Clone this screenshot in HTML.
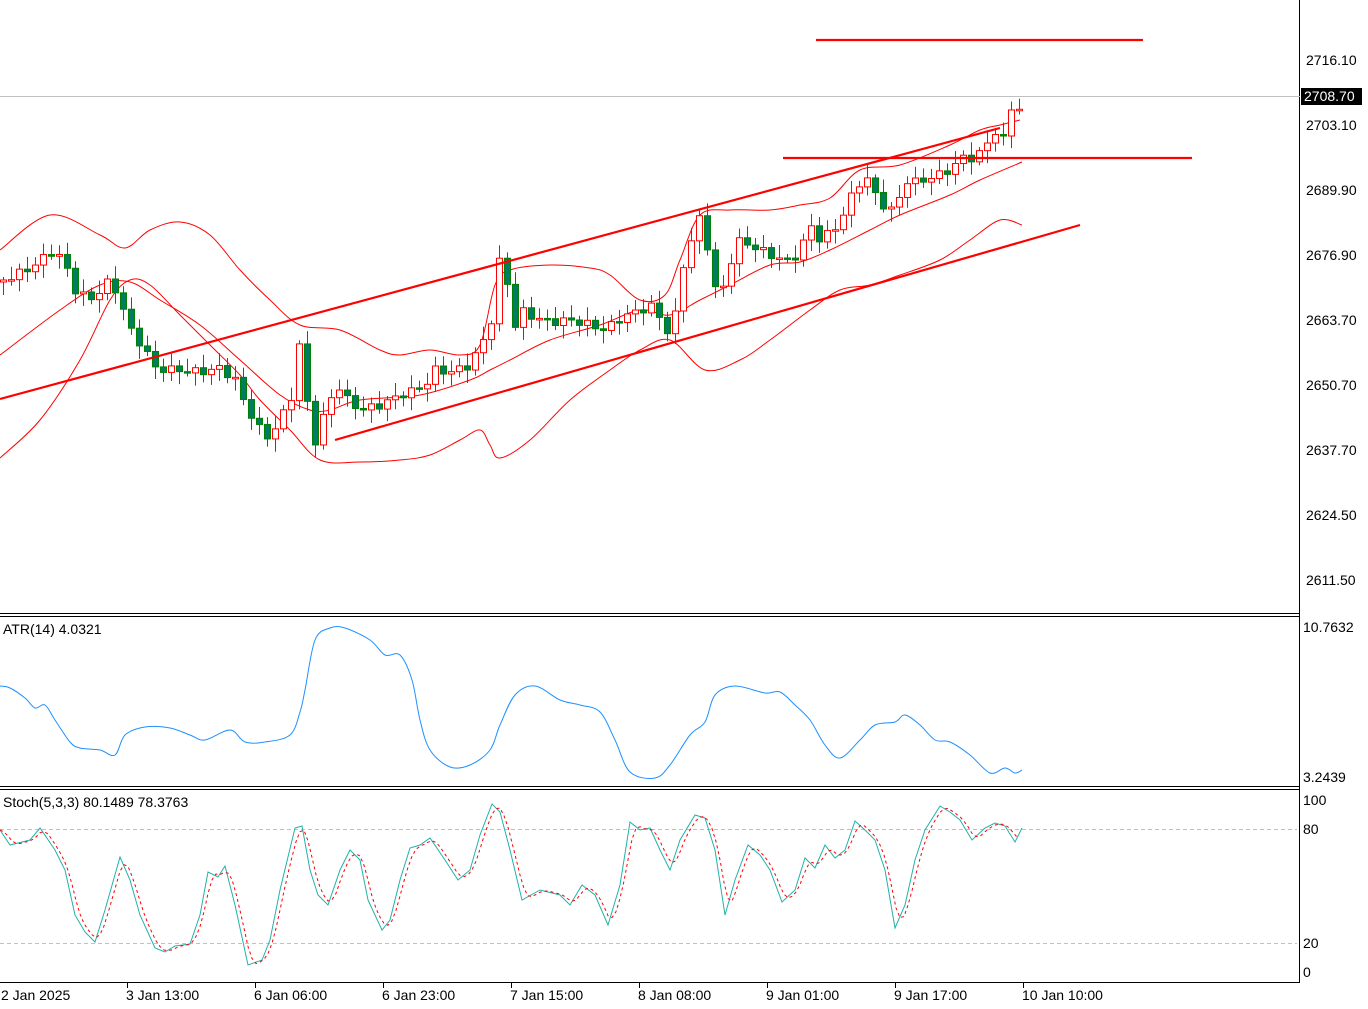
<!DOCTYPE html>
<html><head><meta charset="utf-8"><style>
html,body{margin:0;padding:0;background:#fff;width:1368px;height:1009px;overflow:hidden}
svg{display:block;font-family:"Liberation Sans",sans-serif;font-size:14px}
</style></head><body>
<svg id="s" width="1368" height="1009" xmlns="http://www.w3.org/2000/svg">
<rect width="1368" height="1009" fill="#fff"/>
<line x1="1299.5" y1="0" x2="1299.5" y2="983" stroke="#000"/>
<line x1="0" y1="613.5" x2="1300" y2="613.5" stroke="#000"/>
<line x1="0" y1="616.5" x2="1300" y2="616.5" stroke="#000"/>
<line x1="0" y1="786.5" x2="1300" y2="786.5" stroke="#000"/>
<line x1="0" y1="789.5" x2="1300" y2="789.5" stroke="#000"/>
<line x1="0" y1="982.5" x2="1300" y2="982.5" stroke="#000"/>
<line x1="0" y1="829.5" x2="1297" y2="829.5" stroke="#c0c0c0" stroke-dasharray="4,3"/>
<line x1="0" y1="943.5" x2="1297" y2="943.5" stroke="#c0c0c0" stroke-dasharray="4,3"/>
<line x1="0" y1="96.5" x2="1300" y2="96.5" stroke="#c0c0c0"/>
<g id="bands" fill="none" stroke="#f00" stroke-width="1"></g>
<g id="candles"></g>
<g stroke="#f00" stroke-width="2.2">
<line x1="0" y1="399" x2="1000" y2="128"/>
<line x1="335" y1="440" x2="1080" y2="225"/>
<line x1="816" y1="40" x2="1143" y2="40"/>
<line x1="783" y1="158" x2="1192" y2="158"/>
</g>
<g id="ind" fill="none"></g>
<g fill="#000">
<text x="1306" y="65">2716.10</text>
<text x="1306" y="130">2703.10</text>
<text x="1306" y="195">2689.90</text>
<text x="1306" y="260">2676.90</text>
<text x="1306" y="325">2663.70</text>
<text x="1306" y="390">2650.70</text>
<text x="1306" y="455">2637.70</text>
<text x="1306" y="520">2624.50</text>
<text x="1306" y="585">2611.50</text>
<text x="1303" y="632">10.7632</text>
<text x="1303" y="782">3.2439</text>
<text x="1303" y="805">100</text>
<text x="1303" y="834">80</text>
<text x="1303" y="948">20</text>
<text x="1303" y="977">0</text>
<text x="3" y="634">ATR(14) 4.0321</text>
<text x="3" y="807">Stoch(5,3,3) 80.1489 78.3763</text>
<text x="1" y="1000">2 Jan 2025</text>
<text x="126" y="1000">3 Jan 13:00</text>
<text x="254" y="1000">6 Jan 06:00</text>
<text x="382" y="1000">6 Jan 23:00</text>
<text x="510" y="1000">7 Jan 15:00</text>
<text x="638" y="1000">8 Jan 08:00</text>
<text x="766" y="1000">9 Jan 01:00</text>
<text x="894" y="1000">9 Jan 17:00</text>
<text x="1022" y="1000">10 Jan 10:00</text>
</g>
<g stroke="#000">
<line x1="127.5" y1="983" x2="127.5" y2="988"/><line x1="255.5" y1="983" x2="255.5" y2="988"/>
<line x1="383.5" y1="983" x2="383.5" y2="988"/><line x1="511.5" y1="983" x2="511.5" y2="988"/>
<line x1="639.5" y1="983" x2="639.5" y2="988"/><line x1="767.5" y1="983" x2="767.5" y2="988"/>
<line x1="895.5" y1="983" x2="895.5" y2="988"/><line x1="1023.5" y1="983" x2="1023.5" y2="988"/>
</g>
<rect x="1301" y="88" width="61" height="17" fill="#000"/>
<text x="1304" y="101" fill="#fff">2708.70</text>
</svg>
<script>
const NS="http://www.w3.org/2000/svg";
function el(p,t,a){const e=document.createElementNS(NS,t);for(const k in a)e.setAttribute(k,a[k]);p.appendChild(e);return e;}
function interp(pts,x){for(let i=0;i<pts.length-1;i++){if(x>=pts[i][0]&&x<=pts[i+1][0]){const t=(x-pts[i][0])/(pts[i+1][0]-pts[i][0]);return pts[i][1]+t*(pts[i+1][1]-pts[i][1]);}}return pts[pts.length-1][1];}
function smooth(p){let d='M'+p[0][0]+','+p[0][1];for(let i=0;i<p.length-1;i++){const p0=p[i-1]||p[i],p1=p[i],p2=p[i+1],p3=p[i+2]||p2;
d+=' C'+(p1[0]+(p2[0]-p0[0])/6)+','+(p1[1]+(p2[1]-p0[1])/6)+' '+(p2[0]-(p3[0]-p1[0])/6)+','+(p2[1]-(p3[1]-p1[1])/6)+' '+p2[0]+','+p2[1];}return d;}
const bands=document.getElementById('bands');
const up=[[0,250],[50,215],[100,235],[125,248],[150,230],[180,222],[210,235],[240,270],[270,300],[300,325],[340,330],[380,350],[400,355],[430,350],[460,355],[480,345],[495,285],[510,270],[550,265],[590,268],[610,275],[640,300],[665,295],[680,260],[700,215],[730,210],[770,210],[800,205],[830,198],[860,170],[900,165],[950,145],[980,130],[1000,125],[1020,120]];
const mid=[[0,355],[60,310],[100,285],[130,282],[160,300],[200,325],[240,360],[280,395],[310,410],[330,410],[360,400],[420,395],[470,380],[490,370],[510,360],[550,340],[600,325],[640,310],[670,315],[700,300],[730,285],[770,265],[800,262],[830,250],[870,230],[900,215],[950,195],[980,180],[1022,162]];
const lo=[[0,458],[40,420],[80,360],[110,300],[130,280],[150,285],[180,315],[210,345],[240,375],[260,400],[290,430],[320,460],[360,462],[400,460],[430,455],[460,440],[480,430],[490,445],[500,458],[530,440],[570,400],[610,370],[640,350],[670,340],[705,370],[740,360],[770,340],[810,310],[840,290],[870,285],[900,275],[940,260],[970,240],[1000,220],[1022,225]];
[up,mid,lo].forEach(p=>el(bands,'path',{d:smooth(p)}));
const cl=[[3,280],[15,275],[30,268],[47,255],[55,250],[65,265],[75,290],[90,300],[100,290],[110,280],[120,300],[130,330],[145,350],[155,368],[175,370],[200,372],[220,368],[235,380],[245,405],[260,430],[270,440],[280,415],[290,410],[295,345],[303,345],[311,462],[319,420],[327,415],[335,380],[345,398],[360,410],[380,405],[400,395],[415,390],[425,385],[435,370],[450,372],[470,365],[480,345],[490,330],[497,262],[505,262],[512,335],[520,310],[535,318],[550,322],[570,320],[590,325],[605,330],[620,318],[640,310],[655,305],[665,335],[675,315],[683,265],[695,228],[703,210],[711,282],[719,295],[727,280],[735,240],[750,245],[770,255],[790,262],[800,250],[810,225],[820,240],[835,228],[845,210],[855,188],[862,180],[870,178],[878,205],[887,205],[895,215],[903,180],[915,182],[930,178],[945,172],[955,165],[965,155],[975,160],[985,145],[995,132],[1003,140],[1010,105],[1016,118],[1022,100]];
const cg=document.getElementById('candles');
let prev=282;
for(let i=0;i<128;i++){const x=3+i*8;let c=interp(cl,x);c+=Math.sin(i*2.3)*4;let o=prev;prev=c;
 const bull=c<o;const col=bull?'#f00':'#008000';
 const top=Math.min(o,c),bot=Math.max(o,c);const h=Math.max(bot-top,1.5);
 const wt=top-3-Math.abs(Math.sin(i*1.7))*10, wb=bot+3+Math.abs(Math.cos(i*1.3))*10;
 el(cg,'line',{x1:x+0.5,y1:wt,x2:x+0.5,y2:wb,stroke:col});
 el(cg,'rect',{x:x-2.5,y:top,width:6,height:h,fill:bull?'#fff':'#007b66',stroke:col});
}
const ind=document.getElementById('ind');
const atr=[[0,686],[10,688],[25,698],[35,708],[45,705],[55,720],[70,742],[80,748],[100,750],[115,755],[125,735],[145,727],[170,728],[190,735],[205,740],[230,730],[245,742],[265,742],[290,735],[300,712],[305,690],[315,640],[330,628],[345,628],[370,640],[385,655],[400,655],[412,680],[420,720],[430,750],[450,767],[470,765],[490,750],[500,725],[515,695],[535,686],[560,700],[580,705],[600,712],[615,740],[630,772],[655,778],[670,765],[690,735],[705,722],[715,695],[735,686],[765,693],[780,692],[795,705],[810,720],[825,745],[840,758],[860,740],[875,725],[895,722],[905,715],[920,725],[935,740],[950,742],[970,755],[990,773],[1005,768],[1015,773],[1022,770]];
el(ind,'path',{d:smooth(atr),stroke:'#1e90ff'});
const st=[[0,830],[10,845],[30,840],[40,828],[55,850],[65,870],[75,915],[85,932],[95,942],[105,910],[120,857],[130,880],[140,915],[155,948],[165,952],[175,946],[190,944],[200,915],[208,872],[218,877],[225,866],[235,905],[248,965],[262,960],[270,940],[280,890],[295,828],[302,826],[310,870],[318,895],[328,905],[340,870],[350,850],[360,860],[368,900],[382,930],[390,920],[400,880],[410,848],[420,845],[430,838],[445,860],[458,880],[470,870],[480,835],[492,804],[500,812],[510,850],[522,900],[540,890],[560,895],[570,905],[582,885],[595,895],[608,925],[620,885],[630,822],[640,830],[650,828],[660,850],[670,870],[680,840],[695,815],[705,818],[715,850],[725,915],[735,880],[748,845],[760,855],[770,870],[782,902],[795,890],[805,858],[815,868],[825,845],[835,858],[845,850],[855,821],[865,830],[875,840],[885,870],[895,928],[905,905],[915,860],[925,830],[940,806],[950,812],[960,820],[972,840],[985,828],[995,823],[1005,826],[1015,842],[1022,828]];
el(ind,'polyline',{points:st.map(q=>q.join(',')).join(' '),stroke:'#20b2aa'});
let sig=[];for(let x=0;x<=1022;x+=4){const a=interp(st,Math.max(0,x-8)),b=interp(st,Math.max(0,x-4)),c=interp(st,x);sig.push([x,(a+b+c)/3]);}
el(ind,'polyline',{points:sig.map(q=>q.join(',')).join(' '),stroke:'#f00','stroke-dasharray':'3,3'});
</script>
</body></html>
